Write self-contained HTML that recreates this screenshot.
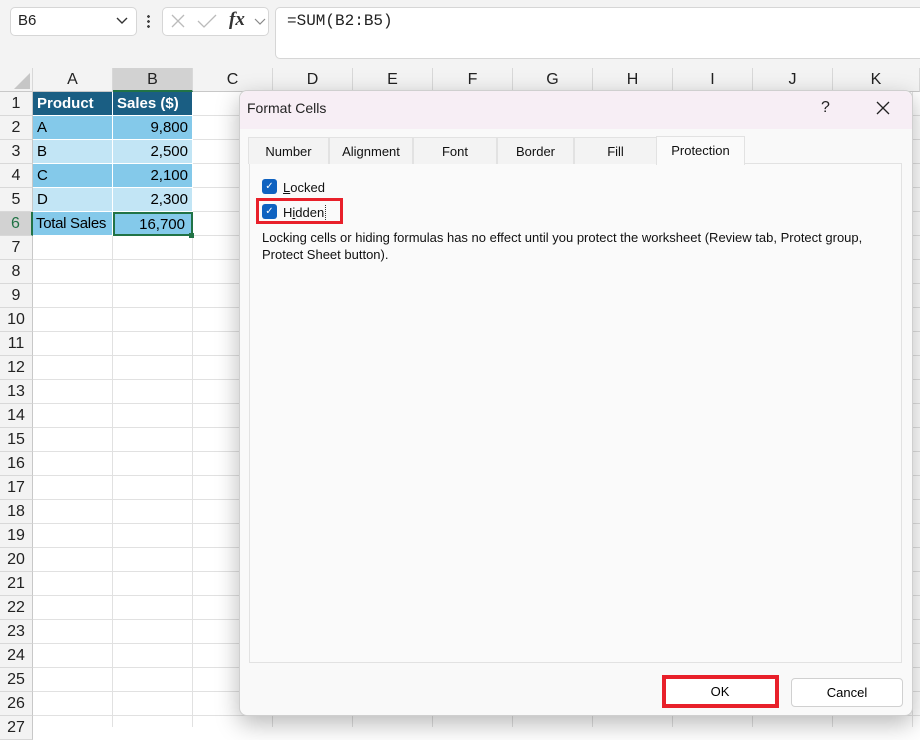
<!DOCTYPE html>
<html><head><style>
*{margin:0;padding:0;box-sizing:border-box}
body{width:920px;height:727px;overflow:hidden;background:#fff;font-family:"Liberation Sans",sans-serif;position:relative}
.abs{position:absolute}
.top{left:0;top:0;width:920px;height:68px;background:#f3f3f3}
.box{background:#fff;border:1px solid #d6d6d6;border-radius:5px}
.ch{top:68px;height:24px;background:#f3f3f3;border-right:1px solid #d8d8d8;border-bottom:1px solid #c8c8c8;font-size:16px;color:#222;text-align:center;line-height:24px}
.rh{left:0;width:33px;height:24px;background:#f3f3f3;border-bottom:1px solid #d8d8d8;border-right:1px solid #c8c8c8;font-size:16px;color:#222;text-align:center;line-height:24px}
.gl{background:#e1e1e1}
.cell{height:24px;font-size:15px;line-height:24px;padding:0 4px;border-right:1px solid #fff;border-bottom:1px solid #fff;white-space:nowrap;overflow:hidden}
.tab{top:137px;height:27px;border:1px solid #e2e2e2;border-bottom:none;font-size:13px;text-align:center;line-height:28px;color:#111;background:#f3f3f3}
.cb{width:15px;height:15px;background:#0f62c0;border-radius:3px;color:#fff;font-size:10px;text-align:center;line-height:15px}
.dt{font-size:13px;color:#111}
</style></head><body>
<div class="abs top"></div>
<div class="abs box" style="left:10px;top:7px;width:127px;height:29px"></div>
<div class="abs" style="left:18px;top:12px;font-size:15px;color:#222">B6</div>
<svg class="abs" style="left:116px;top:17px" width="12" height="8"><path d="M1 1l5 5 5-5" fill="none" stroke="#333" stroke-width="1.4"/></svg>
<div class="abs" style="left:147px;top:14px;width:3px;height:15px;background:radial-gradient(circle,#444 1.3px,transparent 1.5px) 0 0/3px 5px"></div>
<div class="abs box" style="left:162px;top:7px;width:107px;height:29px"></div>
<svg class="abs" style="left:170px;top:13px" width="16" height="16"><path d="M2 2l12 12M14 2L2 14" stroke="#bbb" stroke-width="1.3"/></svg>
<svg class="abs" style="left:197px;top:13px" width="20" height="16"><path d="M1 8l6 6L19 2" fill="none" stroke="#bbb" stroke-width="1.3"/></svg>
<div class="abs" style="left:229px;top:9px;font-family:'Liberation Serif',serif;font-style:italic;font-weight:bold;font-size:19px;color:#333">fx</div>
<svg class="abs" style="left:254px;top:18px" width="12" height="8"><path d="M1 1l5 5 5-5" fill="none" stroke="#888" stroke-width="1.2"/></svg>
<div class="abs box" style="left:275px;top:7px;width:660px;height:52px"></div>
<div class="abs" style="left:287px;top:12px;font-family:'Liberation Mono',monospace;font-size:16px;color:#222">=SUM(B2:B5)</div>

<!-- grid lines -->
<div class="abs" style="left:33px;top:92px;width:887px;height:635px;background:repeating-linear-gradient(to bottom,transparent 0 23px,#e1e1e1 23px 24px),repeating-linear-gradient(to right,transparent 0 79px,#e1e1e1 79px 80px)"></div>
<!-- col headers -->
<div class="abs ch" style="left:0;width:33px"><svg width="20" height="20" style="position:absolute;left:11px;top:2px"><path d="M19 3V19H3Z" fill="#c6c6c6"/></svg></div>
<div class="abs ch" style="left:33px;width:80px">A</div>
<div class="abs ch" style="left:113px;width:80px;background:#d2d2d2;border-bottom:2px solid #217346">B</div>
<div class="abs ch" style="left:193px;width:80px">C</div>
<div class="abs ch" style="left:273px;width:80px">D</div>
<div class="abs ch" style="left:353px;width:80px">E</div>
<div class="abs ch" style="left:433px;width:80px">F</div>
<div class="abs ch" style="left:513px;width:80px">G</div>
<div class="abs ch" style="left:593px;width:80px">H</div>
<div class="abs ch" style="left:673px;width:80px">I</div>
<div class="abs ch" style="left:753px;width:80px">J</div>
<div class="abs ch" style="left:833px;width:87px">K</div>
<!-- row headers -->
<div class="abs rh" style="top:92px">1</div><div class="abs rh" style="top:116px">2</div><div class="abs rh" style="top:140px">3</div><div class="abs rh" style="top:164px">4</div><div class="abs rh" style="top:188px">5</div>
<div class="abs rh" style="top:212px;background:#d2d2d2;border-right:2px solid #217346;color:#217346">6</div>
<div class="abs rh" style="top:236px">7</div><div class="abs rh" style="top:260px">8</div><div class="abs rh" style="top:284px">9</div><div class="abs rh" style="top:308px">10</div><div class="abs rh" style="top:332px">11</div><div class="abs rh" style="top:356px">12</div><div class="abs rh" style="top:380px">13</div><div class="abs rh" style="top:404px">14</div><div class="abs rh" style="top:428px">15</div><div class="abs rh" style="top:452px">16</div><div class="abs rh" style="top:476px">17</div><div class="abs rh" style="top:500px">18</div><div class="abs rh" style="top:524px">19</div><div class="abs rh" style="top:548px">20</div><div class="abs rh" style="top:572px">21</div><div class="abs rh" style="top:596px">22</div><div class="abs rh" style="top:620px">23</div><div class="abs rh" style="top:644px">24</div><div class="abs rh" style="top:668px">25</div><div class="abs rh" style="top:692px">26</div><div class="abs rh" style="top:716px">27</div>
<!-- data -->
<div class="abs cell" style="left:33px;top:92px;width:80px;background:#1a5e83;color:#fff;font-weight:bold">Product</div>
<div class="abs cell" style="left:113px;top:92px;width:80px;background:#1a5e83;color:#fff;font-weight:bold">Sales ($)</div>
<div class="abs cell" style="left:33px;top:116px;width:80px;background:#84c9ea">A</div>
<div class="abs cell" style="left:113px;top:116px;width:80px;background:#84c9ea;text-align:right">9,800</div>
<div class="abs cell" style="left:33px;top:140px;width:80px;background:#c2e5f5">B</div>
<div class="abs cell" style="left:113px;top:140px;width:80px;background:#c2e5f5;text-align:right">2,500</div>
<div class="abs cell" style="left:33px;top:164px;width:80px;background:#84c9ea">C</div>
<div class="abs cell" style="left:113px;top:164px;width:80px;background:#84c9ea;text-align:right">2,100</div>
<div class="abs cell" style="left:33px;top:188px;width:80px;background:#c2e5f5">D</div>
<div class="abs cell" style="left:113px;top:188px;width:80px;background:#c2e5f5;text-align:right">2,300</div>
<div class="abs cell" style="left:33px;top:212px;width:80px;background:#84c9ea;padding-left:3px;letter-spacing:-0.3px">Total Sales</div>
<div class="abs cell" style="left:113px;top:212px;width:80px;background:#84c9ea;text-align:right;border:2px solid #217346;padding-right:6px;line-height:21px">16,700</div>
<div class="abs" style="left:189px;top:233px;width:5px;height:5px;background:#217346"></div>

<!-- dialog -->
<div class="abs" style="left:239px;top:90px;width:674px;height:626px;background:#f9f9f9;border:1px solid #cfcfcf;border-radius:8px;box-shadow:0 8px 24px rgba(0,0,0,.28)">
<div style="position:absolute;left:0;top:0;width:672px;height:38px;background:#f7eef5;border-radius:8px 8px 0 0"></div>
</div>
<div class="abs" style="left:247px;top:100px;font-size:14px;color:#222">Format Cells</div>
<div class="abs" style="left:821px;top:99px;font-size:16px;color:#222">?</div>
<svg class="abs" style="left:876px;top:101px" width="14" height="14"><path d="M1 1l12 12M13 1L1 13" stroke="#222" stroke-width="1.3"/></svg>
<div class="abs" style="left:249px;top:163px;width:653px;height:500px;background:#fafafa;border:1px solid #e2e2e2"></div>
<div class="abs tab" style="left:248px;width:81px">Number</div>
<div class="abs tab" style="left:329px;width:84px">Alignment</div>
<div class="abs tab" style="left:413px;width:84px">Font</div>
<div class="abs tab" style="left:497px;width:77px">Border</div>
<div class="abs tab" style="left:574px;width:83px">Fill</div>
<div class="abs tab" style="left:656px;top:136px;height:29px;width:89px;background:#fafafa">Protection</div>
<div class="abs cb" style="left:262px;top:179px">✓</div>
<div class="abs dt" style="left:283px;top:180px"><u>L</u>ocked</div>
<div class="abs cb" style="left:262px;top:204px">✓</div>
<div class="abs dt" style="left:283px;top:205px;border-right:1px dotted #333;padding-right:1px">H<u>i</u>dden</div>
<div class="abs" style="left:256px;top:198px;width:87px;height:26px;border:3px solid #e8202a"></div>
<div class="abs dt" style="left:262px;top:229px;width:630px;line-height:17px">Locking cells or hiding formulas has no effect until you protect the worksheet (Review tab, Protect group, Protect Sheet button).</div>
<div class="abs" style="left:665px;top:678px;width:110px;height:27px;background:#fff;font-size:13px;text-align:center;line-height:27px">OK</div>
<div class="abs" style="left:662px;top:675px;width:117px;height:33px;border:4px solid #e8202a"></div>
<div class="abs" style="left:791px;top:678px;width:112px;height:29px;background:#fff;border:1px solid #d0d0d0;border-radius:4px;font-size:13px;text-align:center;line-height:27px">Cancel</div>
</body></html>
